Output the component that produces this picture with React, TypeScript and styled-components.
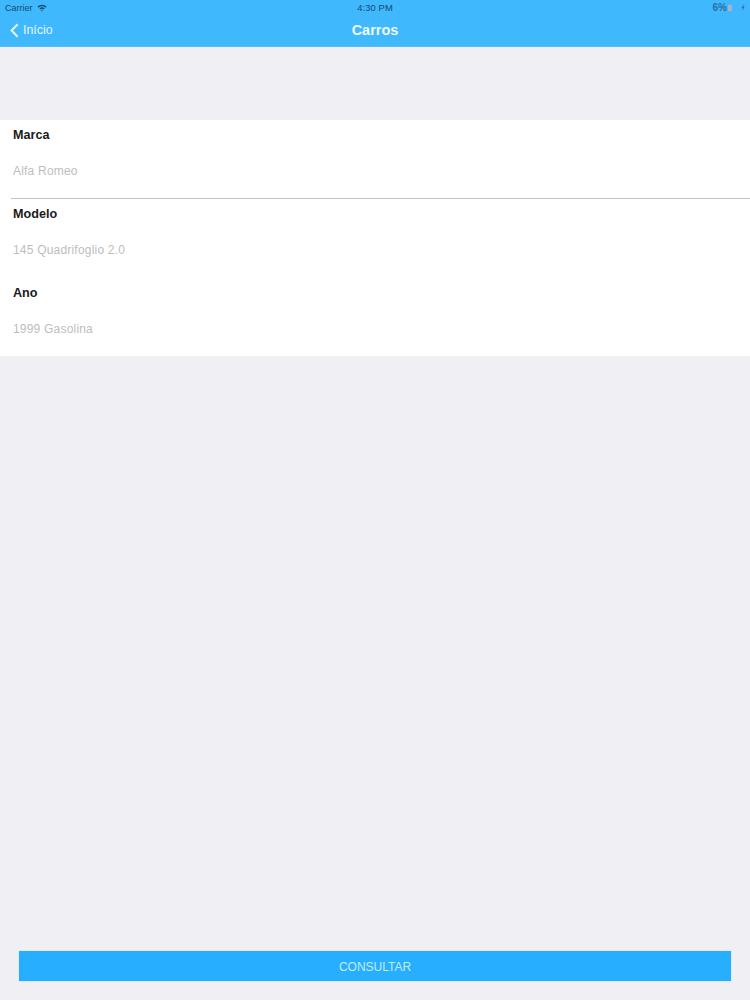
import * as React from 'react';
import styled, { createGlobalStyle } from 'styled-components';

const GlobalStyle = createGlobalStyle`
  html, body {
    margin: 0;
    padding: 0;
    background-color: #efeff4;
  }
  * {
    box-sizing: border-box;
  }
`;

const Page = styled.div`
  display: flex;
  flex-direction: column;
  width: 750px;
  height: 1000px;
  background-color: #efeff4;
  font-family: 'Liberation Sans', Arial, sans-serif;
  overflow: hidden;
`;

const Header = styled.header`
  flex: none;
  height: 47px;
  padding: 0 5px;
  background-color: #3fb8fe;
  border-bottom: 1px solid #54bdf5;
`;

const StatusBar = styled.div`
  display: grid;
  grid-template-columns: 1fr auto 1fr;
  align-items: center;
  height: 15px;
  font-size: 9px;
  color: #17496d;
`;

const Carrier = styled.div`
  display: flex;
  align-items: center;
  gap: 4px;
`;

const Clock = styled.div`
  font-size: 9.4px;
  letter-spacing: 0.1px;
`;

const Battery = styled.div`
  display: flex;
  justify-content: flex-end;
  align-items: center;
  font-size: 10px;
  font-weight: 700;
  color: #2b6f9f;
`;

const BatteryLevel = styled.span`
  width: 4px;
  height: 6px;
  margin: 0 9px 0 1px;
  background-color: #a9b4cc;
`;

const NavBar = styled.div`
  display: grid;
  grid-template-columns: 1fr auto 1fr;
  align-items: center;
  height: 30px;
`;

const BackLink = styled.div`
  display: flex;
  align-items: center;
  gap: 4px;
  padding-left: 5px;
  font-size: 12.4px;
  color: #e3f5ff;
`;

const Title = styled.div`
  font-size: 14.5px;
  font-weight: 700;
  color: #eef9ff;
`;

const Spacer = styled.div`
  flex: none;
  height: 73px;
`;

const Form = styled.section`
  flex: none;
  height: 236px;
  background-color: #ffffff;
`;

const Field = styled.div<{ $divided?: boolean }>`
  display: flex;
  flex-direction: column;
  height: 79px;
  margin-left: ${(p) => (p.$divided ? 11 : 13)}px;
  padding-left: ${(p) => (p.$divided ? 2 : 0)}px;
  border-bottom: ${(p) => (p.$divided ? '1px solid #c4c4c6' : 'none')};
`;

const Label = styled.div`
  height: 15px;
  margin-top: 8px;
  font-size: 12.6px;
  line-height: 15px;
  font-weight: 700;
  color: #1a1a1a;
`;

const Value = styled.div`
  margin-top: 21px;
  font-size: 12px;
  line-height: 15px;
  letter-spacing: 0.2px;
  color: #bdbdc0;
`;

const Footer = styled.footer`
  flex: 1;
  display: flex;
  align-items: flex-end;
  padding: 0 19px 19px;
`;

const SubmitButton = styled.button`
  width: 100%;
  height: 30px;
  padding: 1px 0 0;
  border: none;
  background-color: #27aeff;
  box-shadow: 0 0 1px #8fd9ff;
  font-family: inherit;
  font-size: 12px;
  color: #c4ecff;
`;

const WifiIcon = () => (
  <svg width="10" height="8" viewBox="0 0 10 8">
    <path d="M0.5 2.6 A6.4 6.4 0 0 1 9.5 2.6 L8.4 3.7 A4.8 4.8 0 0 0 1.6 3.7 Z" fill="#17496d" />
    <path d="M2.4 4.5 A3.7 3.7 0 0 1 7.6 4.5 L6.6 5.5 A2.3 2.3 0 0 0 3.4 5.5 Z" fill="#17496d" />
    <path d="M4.1 6.2 A1.3 1.3 0 0 1 5.9 6.2 L5 7.4 Z" fill="#17496d" />
  </svg>
);

const BackIcon = () => (
  <svg width="9" height="15" viewBox="0 0 9 15">
    <path d="M7.6 1.2 L1.6 7.5 L7.6 13.8" fill="none" stroke="#e8f7ff" strokeWidth="2" />
  </svg>
);

const BoltIcon = () => (
  <svg width="4" height="7" viewBox="0 0 4 7">
    <path d="M2.8 0 L0.6 4 H1.8 L1.2 7 L3.6 2.8 H2.3 Z" fill="#2b6f9f" />
  </svg>
);

const fields = [
  { label: 'Marca', value: 'Alfa Romeo', divided: true },
  { label: 'Modelo', value: '145 Quadrifoglio 2.0' },
  { label: 'Ano', value: '1999 Gasolina' },
];

const App: React.FC = (): JSX.Element => {
  return (
    <Page>
      <GlobalStyle />
      <Header>
        <StatusBar>
          <Carrier>
            Carrier
            <WifiIcon />
          </Carrier>
          <Clock>4:30 PM</Clock>
          <Battery>
            6%
            <BatteryLevel />
            <BoltIcon />
          </Battery>
        </StatusBar>
        <NavBar>
          <BackLink>
            <BackIcon />
            Início
          </BackLink>
          <Title>Carros</Title>
        </NavBar>
      </Header>
      <Spacer />
      <Form>
        {fields.map((field) => (
          <Field key={field.label} $divided={field.divided}>
            <Label>{field.label}</Label>
            <Value>{field.value}</Value>
          </Field>
        ))}
      </Form>
      <Footer>
        <SubmitButton>CONSULTAR</SubmitButton>
      </Footer>
    </Page>
  );
};

export default App;
